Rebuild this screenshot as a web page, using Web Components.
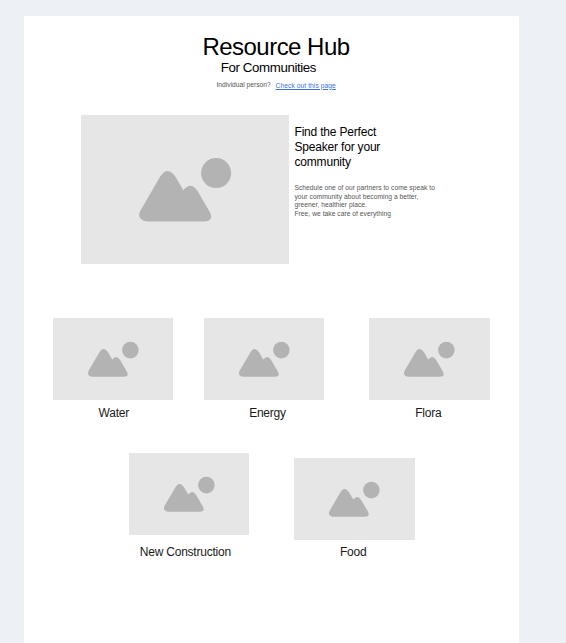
<!DOCTYPE html>
<html lang="en">
<head>
<meta charset="utf-8">
<title>Resource Hub</title>
<style>
html,body{margin:0;height:100%;background:#edf1f6;overflow:hidden}
body{font-family:"Liberation Sans",Arial,sans-serif;color:#000}
</style>
</head>
<body>
<resource-page></resource-page>
<script>
const define = (name, html) => {
  const t = document.createElement('template');
  t.innerHTML = html;
  customElements.define(name, class extends HTMLElement {
    constructor() {
      super();
      this.attachShadow({mode: 'open'}).append(t.content.cloneNode(true));
    }
  });
};

define('image-placeholder', `
<style>:host{display:block;background:#e6e6e6}svg{display:block;width:100%;height:100%}</style>
<svg viewBox="0 0 208 149" fill="#b3b3b3" aria-hidden="true">
<path d="M59.5 95.5 L77.5 64.5 Q82 56 86.3 56 Q91 56 95.2 63 L102.3 75.3 Q106 70.7 109.3 70.7 Q113 70.7 116.5 76 L128.5 96.5 Q132 102.5 128.5 105 Q127 106.4 123 106.4 H68 Q62 106.4 59.5 103.5 Q56.8 100.5 59.5 95.5 Z"/>
<circle cx="135.1" cy="58.1" r="15"/>
</svg>`);

define('hub-header', `
<style>
:host{display:flex;flex-direction:column;align-items:flex-start;white-space:nowrap}
h1,h2,p{margin:0;font-weight:400}
h1{font-size:24px;line-height:27px;letter-spacing:-.52px;margin-left:178.4px}
h2{font-size:13.3px;line-height:15px;letter-spacing:-.4px;margin-left:196.8px}
p{display:flex;gap:4.8px;font-size:6.7px;line-height:8px;margin:6px 0 0 192.5px;color:#555}
a{color:#3b73e0;text-decoration:underline;padding-top:.7px;letter-spacing:.06px}
</style>
<h1>Resource Hub</h1><h2>For Communities</h2>
<p><span>Individual person?</span><a href="#">Check out this page</a></p>`);

define('speaker-feature', `
<style>
:host{display:flex;gap:5.5px;white-space:nowrap}
image-placeholder{width:208px;height:149px}
h3,p{margin:0;font-weight:400}
h3{font-size:12px;line-height:15px;letter-spacing:-.19px;padding-top:9.7px}
p{font-size:6.7px;line-height:8.75px;color:#555;margin-top:13.9px;letter-spacing:.03px}
</style>
<image-placeholder></image-placeholder>
<div><h3>Find the Perfect<br>Speaker for your<br>community</h3>
<p>Schedule one of our partners to come speak to<br>your community about becoming a better,<br>greener, healthier place.<br>Free, we take care of everything</p></div>`);

define('topic-card', `
<style>
:host{display:block;width:120.4px;text-align:center;font-size:12px;line-height:14px;letter-spacing:-.22px;color:#1a1a1a;white-space:nowrap}
image-placeholder{height:82.3px;margin-bottom:var(--label-gap,6px)}
.label{display:block;padding-left:var(--shift,0)}
</style>
<image-placeholder></image-placeholder><span class="label"><slot></slot></span>`);

define('topic-row', `
<style>:host{display:flex;align-items:flex-end}</style><slot></slot>`);

define('resource-page', `
<style>
:host{display:block;box-sizing:border-box;width:494.5px;height:627px;margin:16px 0 0 24px;padding-top:17px;background:#fff;float:left}
speaker-feature{margin:25.5px 0 0 57px}
topic-row.first{margin:53.5px 0 0 29.1px}
topic-row.second{margin:32.8px 0 0 104.7px}
.first topic-card:nth-child(2){--shift:7px;margin:0 45.2px 0 30.3px}
.first topic-card:first-child{--shift:1px}
.second topic-card:first-child{--label-gap:10.2px;margin-right:45.2px}
.second topic-card:last-child{--label-gap:4.9px}
.first topic-card:last-child,.second topic-card{text-indent:-2.5px}
.second topic-card:first-child{text-indent:-7px}
</style>
<hub-header></hub-header>
<speaker-feature></speaker-feature>
<topic-row class="first"><topic-card>Water</topic-card><topic-card>Energy</topic-card><topic-card>Flora</topic-card></topic-row>
<topic-row class="second"><topic-card>New Construction</topic-card><topic-card>Food</topic-card></topic-row>`);
</script>
</body>
</html>
